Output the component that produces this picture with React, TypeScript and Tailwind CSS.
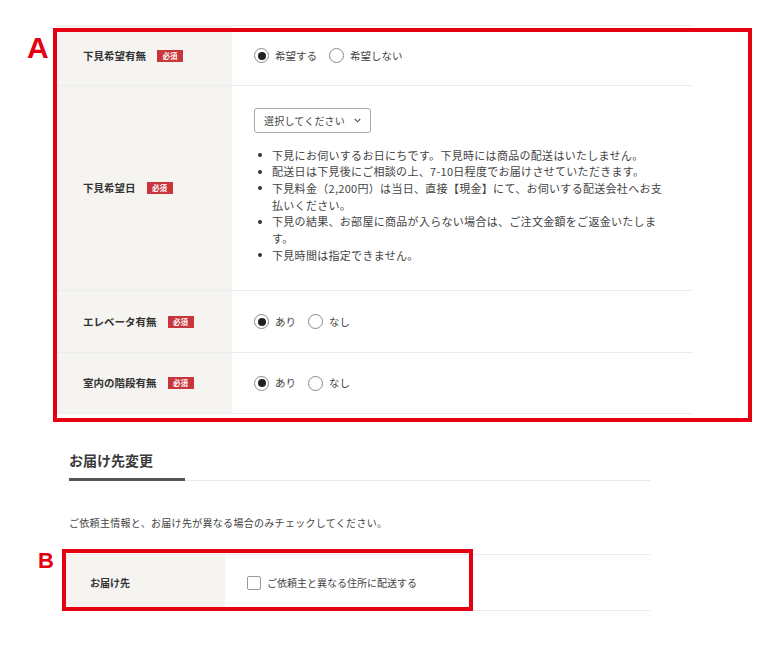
import React from 'react';

const jp = { fontFamily: '"Noto Sans CJK JP", "Noto Sans", sans-serif' };

const Badge = () => (
  <span className="inline-flex items-center justify-center w-[26px] h-[12px] bg-[#c8353b] text-white text-[7.5px] font-bold leading-none">
    必須
  </span>
);

const Radio = ({ label, checked }: { label: string; checked?: boolean }) => (
  <label className="flex items-center gap-[6px]">
    <span className="flex items-center justify-center w-[15px] h-[15px] rounded-full border border-[#8a8a8a] bg-white">
      {checked && <span className="w-[8px] h-[8px] rounded-full bg-[#222]" />}
    </span>
    <span className="text-[10.5px] text-[#444]">{label}</span>
  </label>
);

const LabelCell = ({ text }: { text: string }) => (
  <div className="flex items-center gap-[11px] bg-[#f5f4f1] pl-[27px]">
    <span className="text-[10.5px] font-bold text-[#333]">{text}</span>
    <Badge />
  </div>
);

const notes: string[][] = [
  ['下見にお伺いするお日にちです。下見時には商品の配送はいたしません。'],
  ['配送日は下見後にご相談の上、7-10日程度でお届けさせていただきます。'],
  ['下見料金（2,200円）は当日、直接【現金】にて、お伺いする配送会社へお支', '払いください。'],
  ['下見の結果、お部屋に商品が入らない場合は、ご注文金額をご返金いたしま', 'す。'],
  ['下見時間は指定できません。'],
];

export default function App() {
  return (
    <div className="relative w-[775px] h-[656px] overflow-hidden bg-white text-[#333]" style={jp}>
      {/* section A */}
      <div className="pt-[25px] pl-[56px]">
        <div className="w-[637px] border-t border-[#ececec]">
          <div className="grid grid-cols-[176px_1fr] h-[60px] border-b border-[#ececec]">
            <LabelCell text="下見希望有無" />
            <div className="flex items-center gap-[12px] pl-[22px]">
              <Radio label="希望する" checked />
              <Radio label="希望しない" />
            </div>
          </div>

          <div className="grid grid-cols-[176px_1fr] h-[205px] border-b border-[#ececec]">
            <LabelCell text="下見希望日" />
            <div className="flex flex-col pl-[22px] pt-[22px]">
              <div className="flex items-center w-[117px] h-[25px] border border-[#a8a8a8] rounded-[3px] pl-[9px] gap-[9px] text-[10px] tracking-[0.2px] text-[#444]">
                <span>選択してください</span>
                <svg width="7" height="5" viewBox="0 0 7 5" fill="none">
                  <path d="M0.8 1 L3.5 3.8 L6.2 1" stroke="#555" strokeWidth="1.1" />
                </svg>
              </div>
              <ul className="mt-[13.5px] text-[11px] tracking-[0.3px] leading-[16.7px] text-[#444]">
                {notes.map((lines, i) => (
                  <li key={i} className="flex">
                    <span className="flex items-center h-[16.7px] w-[18px] shrink-0">
                      <span className="ml-[4px] w-[4px] h-[4px] rounded-full bg-[#333]" />
                    </span>
                    <span className="whitespace-nowrap">
                      {lines.map((l, j) => (
                        <React.Fragment key={j}>
                          {j > 0 && <br />}
                          {l}
                        </React.Fragment>
                      ))}
                    </span>
                  </li>
                ))}
              </ul>
            </div>
          </div>

          <div className="grid grid-cols-[176px_1fr] h-[62px] border-b border-[#ececec]">
            <LabelCell text="エレベータ有無" />
            <div className="flex items-center gap-[12px] pl-[22px]">
              <Radio label="あり" checked />
              <Radio label="なし" />
            </div>
          </div>

          <div className="grid grid-cols-[176px_1fr] h-[61px] border-b border-[#ececec]">
            <LabelCell text="室内の階段有無" />
            <div className="flex items-center gap-[12px] pl-[22px]">
              <Radio label="あり" checked />
              <Radio label="なし" />
            </div>
          </div>
        </div>
      </div>

      {/* section B */}
      <div className="mt-[36px] pl-[66px]">
        <div className="ml-[3px] w-[581px] flex items-end border-b border-[#e8e8e8]">
          <div className="w-[116px] -mb-px pb-[8px] border-b-[3px] border-[#555]">
            <h2 className="text-[14px] leading-[20px] font-bold text-[#3a3a3a]">お届け先変更</h2>
          </div>
        </div>
        <p className="ml-[3px] mt-[34px] text-[10px] tracking-[0.3px] leading-[16px] text-[#444]">
          ご依頼主情報と、お届け先が異なる場合のみチェックしてください。
        </p>
        <div className="mt-[23px] w-[584px] h-[57px] grid grid-cols-[159px_1fr] border-y border-[#ececec]">
          <div className="flex items-center bg-[#f5f4f1] pl-[24px]">
            <span className="text-[10px] font-bold text-[#333]">お届け先</span>
          </div>
          <label className="flex items-center gap-[6px] pl-[22px]">
            <span className="w-[14px] h-[14px] rounded-[2px] border border-[#999] bg-white" />
            <span className="text-[10px] text-[#444]">ご依頼主と異なる住所に配送する</span>
          </label>
        </div>
      </div>

      {/* annotation overlays */}
      <div className="absolute left-[53px] top-[28px] w-[699px] h-[394px] border-4 border-[#e50012] pointer-events-none" />
      <span
        className="absolute left-[27px] top-[33px] text-[30px] font-bold leading-none text-[#e50012]"
        style={{ fontFamily: '"Liberation Sans", Arial, sans-serif' }}
      >
        A
      </span>
      <div className="absolute left-[62px] top-[549px] w-[411px] h-[62px] border-4 border-[#e50012] pointer-events-none" />
      <span
        className="absolute left-[38px] top-[550px] text-[22px] font-bold leading-none text-[#e50012]"
        style={{ fontFamily: '"Liberation Sans", Arial, sans-serif' }}
      >
        B
      </span>
    </div>
  );
}
